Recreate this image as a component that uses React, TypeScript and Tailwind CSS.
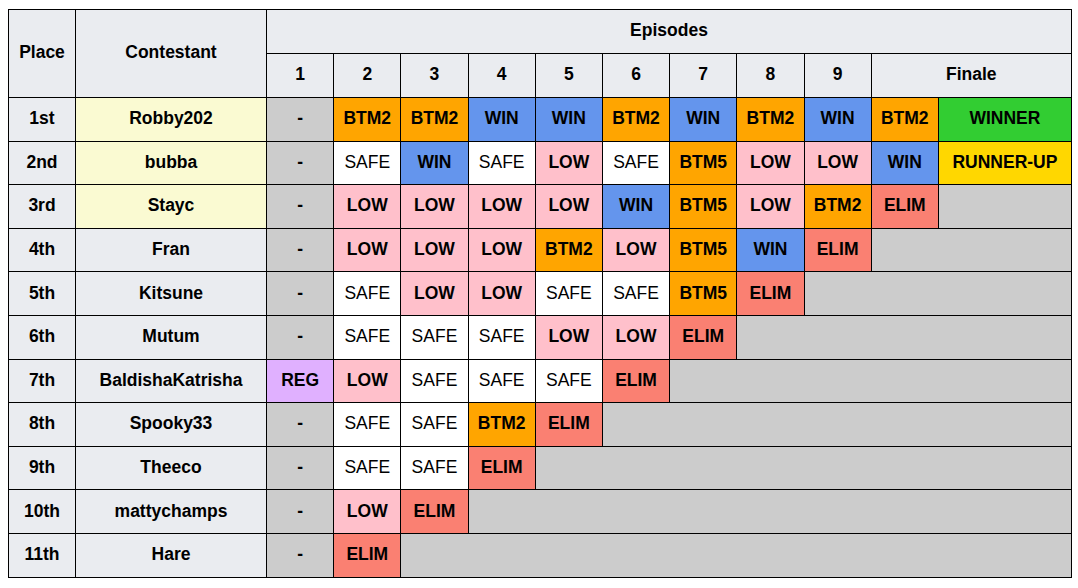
type Cell = string | { grey: number };

interface Contestant {
  place: string;
  name: string;
  top: boolean;
  results: Cell[];
}

const contestants: Contestant[] = [
  { place: '1st', name: 'Robby202', top: true, results: ['-', 'BTM2', 'BTM2', 'WIN', 'WIN', 'BTM2', 'WIN', 'BTM2', 'WIN', 'BTM2', 'WINNER'] },
  { place: '2nd', name: 'bubba', top: true, results: ['-', 'SAFE', 'WIN', 'SAFE', 'LOW', 'SAFE', 'BTM5', 'LOW', 'LOW', 'WIN', 'RUNNER-UP'] },
  { place: '3rd', name: 'Stayc', top: true, results: ['-', 'LOW', 'LOW', 'LOW', 'LOW', 'WIN', 'BTM5', 'LOW', 'BTM2', 'ELIM', { grey: 1 }] },
  { place: '4th', name: 'Fran', top: false, results: ['-', 'LOW', 'LOW', 'LOW', 'BTM2', 'LOW', 'BTM5', 'WIN', 'ELIM', { grey: 2 }] },
  { place: '5th', name: 'Kitsune', top: false, results: ['-', 'SAFE', 'LOW', 'LOW', 'SAFE', 'SAFE', 'BTM5', 'ELIM', { grey: 3 }] },
  { place: '6th', name: 'Mutum', top: false, results: ['-', 'SAFE', 'SAFE', 'SAFE', 'LOW', 'LOW', 'ELIM', { grey: 4 }] },
  { place: '7th', name: 'BaldishaKatrisha', top: false, results: ['REG', 'LOW', 'SAFE', 'SAFE', 'SAFE', 'ELIM', { grey: 5 }] },
  { place: '8th', name: 'Spooky33', top: false, results: ['-', 'SAFE', 'SAFE', 'BTM2', 'ELIM', { grey: 6 }] },
  { place: '9th', name: 'Theeco', top: false, results: ['-', 'SAFE', 'SAFE', 'ELIM', { grey: 7 }] },
  { place: '10th', name: 'mattychamps', top: false, results: ['-', 'LOW', 'ELIM', { grey: 8 }] },
  { place: '11th', name: 'Hare', top: false, results: ['-', 'ELIM', { grey: 9 }] },
];

const styles: Record<string, string> = {
  '-': 'bg-[#cccccc] font-bold',
  SAFE: 'bg-white font-normal',
  LOW: 'bg-[#ffc0cb] font-bold',
  WIN: 'bg-[#6495ed] font-bold',
  BTM2: 'bg-[#ffa500] font-bold',
  BTM5: 'bg-[#ffa500] font-bold',
  ELIM: 'bg-[#fa8072] font-bold',
  REG: 'bg-[#e0b0ff] font-bold',
  WINNER: 'bg-[#32cd32] font-bold',
  'RUNNER-UP': 'bg-[#ffd700] font-bold',
};

const td = 'border border-black text-center p-0 pb-[2px]';

export default function App() {
  return (
    <div className="min-h-[588px] bg-white pt-[9px] pl-[8px]">
      <table
        className="w-[1063px] table-fixed border-collapse text-[17.5px] text-black"
        style={{ fontFamily: '"Liberation Sans", Arial, sans-serif' }}
      >
        <colgroup>
          <col className="w-[67px]" />
          <col className="w-[191px]" />
          {Array.from({ length: 10 }).map((_, i) => (
            <col key={i} className="w-[67.2px]" />
          ))}
          <col className="w-[133px]" />
        </colgroup>
        <thead>
          <tr className="h-[44px] bg-[#eaecf0]">
            <th rowSpan={2} className={td}>Place</th>
            <th rowSpan={2} className={td}>Contestant</th>
            <th colSpan={11} className={td}>Episodes</th>
          </tr>
          <tr className="h-[44px] bg-[#eaecf0]">
            {['1', '2', '3', '4', '5', '6', '7', '8', '9'].map((e) => (
              <th key={e} className={td}>{e}</th>
            ))}
            <th colSpan={2} className={td}>Finale</th>
          </tr>
        </thead>
        <tbody>
          {contestants.map((c) => (
            <tr key={c.place} className="h-[43.6px]">
              <td className={`${td} bg-[#eaecf0] font-bold`}>{c.place}</td>
              <td className={`${td} font-bold ${c.top ? 'bg-[#fafad2]' : 'bg-[#eaecf0]'}`}>{c.name}</td>
              {c.results.map((r, i) =>
                typeof r === 'string' ? (
                  <td key={i} className={`${td} ${styles[r]}`}>{r}</td>
                ) : (
                  <td key={i} colSpan={r.grey} className={`${td} bg-[#cccccc]`} />
                )
              )}
            </tr>
          ))}
        </tbody>
      </table>
    </div>
  );
}
